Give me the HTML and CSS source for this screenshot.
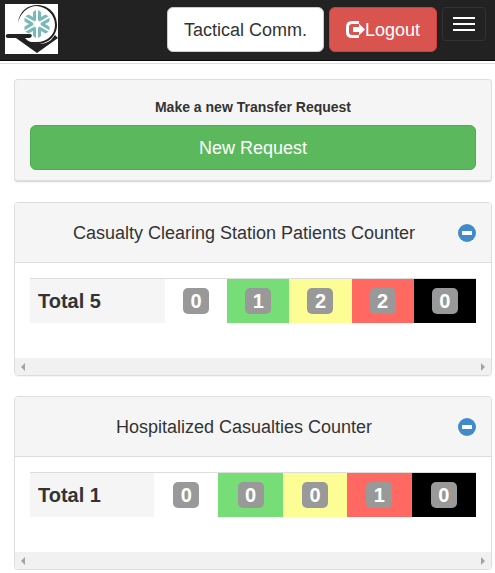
FILE: index.html
```html
<!DOCTYPE html>
<html lang="en">
<head>
    <meta charset="UTF-8">
    <meta name="viewport" content="width=device-width, initial-scale=1.0">
    <title>Tactical Comm.</title>
    <link rel="stylesheet" href="styles.css">
</head>
<body>
    <nav class="navbar">
        <a href="#" class="brand" aria-label="Home">
            <svg class="logo" viewBox="0 0 53 50">
                <rect width="53" height="50" fill="#fff"/>
                <path d="M13 19C14 7 23 1 32 1C44 1 52 10 52 21C52 32 43 40 32 40C28 40 24 39 21 37C24 38 28 38 32 38C42 38 50 31 50 21C50 11 42 3 32 2C23 2 15 9 13 19Z" fill="#222"/>
                <path d="M3 30H25C28 30 27 34 24 34H20C25 40 38 43 46 36L50 31L53 34L32 49L11 34H3C0 34 0 30 3 30Z" fill="#222"/>
                <g fill="#79b9b8">
                    <path id="arm" d="M28 8L31 6V17L28 15ZM33 6L36 8V15L33 17Z"/>
                    <use href="#arm" transform="rotate(60 32 20)"/>
                    <use href="#arm" transform="rotate(120 32 20)"/>
                    <use href="#arm" transform="rotate(180 32 20)"/>
                    <use href="#arm" transform="rotate(240 32 20)"/>
                    <use href="#arm" transform="rotate(300 32 20)"/>
                </g>
            </svg>
        </a>
        <div class="nav-buttons">
            <button type="button" class="btn btn-default">Tactical Comm.</button>
            <button type="button" class="btn btn-danger">
                <svg class="icon-logout" viewBox="0 0 19 18">
                    <path d="M13 1.500H6Q1.500 1.500 1.500 6V11Q1.500 15.500 6 15.500H13" fill="none" stroke="#fff" stroke-width="3"/>
                    <path d="M7 6H13V2.500L19 8.500L13 14.500V11H7Z" fill="#fff"/>
                </svg>Logout
            </button>
            <button type="button" class="toggle" aria-label="Menu">
                <span class="icon-bar"></span>
                <span class="icon-bar"></span>
                <span class="icon-bar"></span>
            </button>
        </div>
    </nav>

    <main class="content">
        <section class="panel panel-request">
            <p class="request-label">Make a new Transfer Request</p>
            <button type="button" class="btn btn-success">New Request</button>
        </section>

        <section class="panel">
            <div class="panel-heading">
                <h2 class="panel-title">Casualty Clearing Station Patients Counter</h2>
                <button type="button" class="collapse" aria-label="Collapse">
                    <svg class="icon-minus" viewBox="0 0 18 18">
                        <circle cx="9" cy="9" r="9" fill="#428bca"/>
                        <rect x="4" y="7" width="10" height="4" fill="#fff"/>
                    </svg>
                </button>
            </div>
            <div class="panel-body">
                <table class="counter">
                    <tr>
                        <th class="total total-clearing" scope="row">Total 5</th>
                        <td><span class="badge">0</span></td>
                        <td class="green"><span class="badge">1</span></td>
                        <td class="yellow"><span class="badge">2</span></td>
                        <td class="red"><span class="badge">2</span></td>
                        <td class="black"><span class="badge">0</span></td>
                    </tr>
                </table>
            </div>
            <div class="scrollbar">
                <span class="arrow arrow-left"></span>
                <span class="arrow arrow-right"></span>
            </div>
        </section>

        <section class="panel">
            <div class="panel-heading">
                <h2 class="panel-title">Hospitalized Casualties Counter</h2>
                <button type="button" class="collapse" aria-label="Collapse">
                    <svg class="icon-minus" viewBox="0 0 18 18">
                        <circle cx="9" cy="9" r="9" fill="#428bca"/>
                        <rect x="4" y="7" width="10" height="4" fill="#fff"/>
                    </svg>
                </button>
            </div>
            <div class="panel-body">
                <table class="counter">
                    <tr>
                        <th class="total total-hospital" scope="row">Total 1</th>
                        <td><span class="badge">0</span></td>
                        <td class="green"><span class="badge">0</span></td>
                        <td class="yellow"><span class="badge">0</span></td>
                        <td class="red"><span class="badge">1</span></td>
                        <td class="black"><span class="badge">0</span></td>
                    </tr>
                </table>
            </div>
            <div class="scrollbar">
                <span class="arrow arrow-left"></span>
                <span class="arrow arrow-right"></span>
            </div>
        </section>
    </main>
</body>
</html>
```
FILE: styles.css
```css
* {
    box-sizing: border-box;
}
body {
    margin: 0;
    background-color: #fff;
    color: #333;
    font-family: "Liberation Sans", Arial, sans-serif;
    font-size: 14px;
    line-height: 20px;
}
.navbar {
    display: flex;
    justify-content: space-between;
    align-items: flex-start;
    padding: 4px 9px 6px 5px;
    background-color: #222;
    border-bottom: 1px solid #080808;
}
.logo {
    display: block;
    width: 53px;
    height: 50px;
}
.nav-buttons {
    display: flex;
    align-items: flex-start;
    gap: 5px;
    padding-top: 3px;
}
.btn {
    display: flex;
    align-items: center;
    justify-content: center;
    height: 45px;
    padding: 0 16px;
    border: 1px solid transparent;
    border-radius: 6px;
    font-family: inherit;
    font-size: 18px;
    line-height: 24px;
    cursor: pointer;
}
.btn-default {
    background-color: #fff;
    border-color: #ccc;
    color: #333;
}
.btn-danger {
    background-color: #d9534f;
    border-color: #d43f3a;
    color: #fff;
}
.btn-success {
    width: 100%;
    background-color: #5cb85c;
    border-color: #4cae4c;
    color: #fff;
}
.icon-logout {
    width: 19px;
    height: 18px;
}
.toggle {
    display: flex;
    flex-direction: column;
    gap: 4px;
    width: 44px;
    padding: 9px 10px;
    background-color: transparent;
    border: 1px solid #333;
    border-radius: 4px;
    cursor: pointer;
}
.icon-bar {
    width: 22px;
    height: 2px;
    background-color: #fff;
}
.content {
    display: flex;
    flex-direction: column;
    gap: 20px;
    padding: 15px 3px 0 14px;
    margin-top: 2px;
    border-top: 1px solid #ddd;
}
.panel {
    border: 1px solid #ddd;
    border-radius: 4px;
    box-shadow: 0 1px 1px rgba(0, 0, 0, 0.05);
    overflow: hidden;
}
.panel-request {
    padding: 17px 15px 10px;
    background-color: #f5f5f5;
    border-bottom-width: 2px;
}
.request-label {
    margin: 0 0 8px;
    font-weight: bold;
    text-align: center;
}
.panel-heading {
    display: flex;
    align-items: center;
    height: 60px;
    padding: 0 15px;
    background-color: #f5f5f5;
    border-bottom: 1px solid #ddd;
}
.panel-title {
    flex: 1;
    margin: 0;
    font-size: 18px;
    font-weight: normal;
    text-align: center;
}
.collapse {
    padding: 0;
    background: none;
    border: 0;
    cursor: pointer;
}
.icon-minus {
    display: block;
    width: 18px;
    height: 18px;
}
.panel-body {
    padding: 15px 15px 35px;
}
.counter {
    width: 100%;
    table-layout: fixed;
    border-collapse: separate;
    border-spacing: 0;
    font-size: 20px;
}
.counter th, .counter td {
    height: 45px;
    padding: 0;
    border-top: 1px solid #ddd;
    text-align: center;
}
.counter .total {
    padding-left: 8px;
    background-color: #f5f5f5;
    text-align: left;
}
.total-clearing {
    width: 135px;
}
.total-hospital {
    width: 124px;
}
.counter .green {
    background-color: #77dd77;
}
.counter .yellow {
    background-color: #fdfd96;
}
.counter .red {
    background-color: #ff6961;
}
.counter .black {
    background-color: #000;
}
.badge {
    display: inline-block;
    width: 26px;
    border-radius: 5px;
    background-color: #999;
    color: #fff;
    font-weight: bold;
    line-height: 26px;
    vertical-align: middle;
}
.scrollbar {
    display: flex;
    justify-content: space-between;
    align-items: center;
    height: 17px;
    padding: 0 6px;
    background-color: #f1f1f1;
}
.arrow {
    border: 4px solid transparent;
}
.arrow-left {
    border-left-width: 0;
    border-right-color: #a3a3a3;
}
.arrow-right {
    border-right-width: 0;
    border-left-color: #a3a3a3;
}
```
